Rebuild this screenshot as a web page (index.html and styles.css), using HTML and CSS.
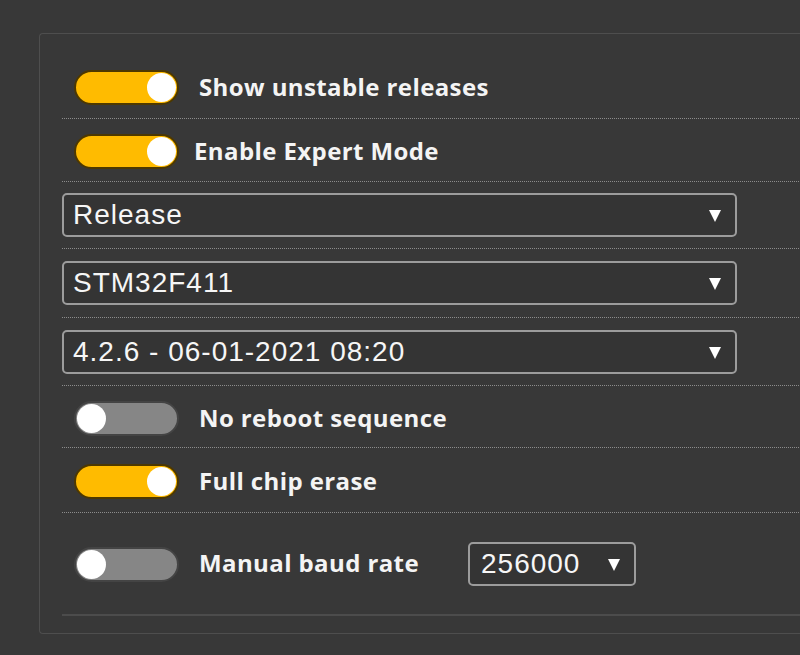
FILE: index.html
```html
<!DOCTYPE html>
<html lang="en">
<head>
<meta charset="utf-8">
<title>Firmware Flasher Options</title>
<link rel="stylesheet" href="styles.css">
</head>
<body>
<div class="page">
  <div class="panel">
    <div class="options">
      <div class="row row-first">
        <label class="toggle on"><span class="knob"></span></label>
        <span class="label">Show unstable releases</span>
      </div>
      <div class="row row-second">
        <label class="toggle on"><span class="knob"></span></label>
        <span class="label label-tight">Enable Expert Mode</span>
      </div>
      <div class="row row-select row-select-a">
        <div class="select wide"><span class="value">Release</span><span class="arrow"></span></div>
      </div>
      <div class="row row-select row-select-b">
        <div class="select wide"><span class="value">STM32F411</span><span class="arrow"></span></div>
      </div>
      <div class="row row-select row-select-c">
        <div class="select wide"><span class="value">4.2.6 - 06-01-2021 08:20</span><span class="arrow"></span></div>
      </div>
      <div class="row row-sixth">
        <label class="toggle"><span class="knob"></span></label>
        <span class="label">No reboot sequence</span>
      </div>
      <div class="row row-seventh">
        <label class="toggle on"><span class="knob"></span></label>
        <span class="label">Full chip erase</span>
      </div>
      <div class="row row-last">
        <label class="toggle"><span class="knob"></span></label>
        <span class="label">Manual baud rate</span>
        <div class="select baud"><span class="value">256000</span><span class="arrow"></span></div>
      </div>
    </div>
  </div>
</div>
</body>
</html>
```

FILE: styles.css
```css
* {
  box-sizing: border-box;
}

html, body {
  margin: 0;
  background: #383838;
  overflow: hidden;
}

.page {
  width: 800px;
  height: 655px;
  padding: 33px 0 0 39px;
}

/* bordered box that runs off the right edge */
.panel {
  width: 800px;
  height: 601px;
  border: 1px solid #4e4e4e;
  border-right: none;
  border-radius: 4px 0 0 4px;
  padding: 0 0 0 22px;
  background: #383838;
}

.options {
  border-bottom: 2px solid #4c4c4c;
}

.row {
  display: flex;
  align-items: center;
  border-bottom: 1px dotted #8c8c8c;
  padding: 15px 0 12px 0;
}

.row-first { padding: 36px 0 13px 0; }
.row-second { padding: 15px 0 12px 0; }
.row-select-a { padding: 11px 0 11px 0; }
.row-select-b { padding: 12px 0 12px 0; }
.row-select-c { padding: 12px 0 11px 0; }
.row-sixth { padding: 15px 0 11px 0; }
.row-seventh { padding: 16px 0 13px 0; }
.row-last {
  padding: 29px 0 28px 0;
  border-bottom: none;
}

/* switch */
.toggle {
  position: relative;
  flex: none;
  width: 105px;
  height: 35px;
  margin-left: 12px;
  border-radius: 18px;
  background: #868686;
  border: 2px solid #444444;
}

.toggle.on {
  background: #ffbb00;
  border-color: #4d3800;
}

.knob {
  position: absolute;
  top: 1px;
  left: 1px;
  width: 29px;
  height: 29px;
  border-radius: 50%;
  background: #ffffff;
}

.toggle.on .knob {
  left: auto;
  right: 1px;
}

.label {
  margin-left: 20px;
  margin-top: -3px;
  font-family: "Open Sans", "Liberation Sans", sans-serif;
  font-weight: 700;
  font-size: 24px;
  letter-spacing: 0.4px;
  color: #f4f4f4;
  white-space: nowrap;
}

.label-tight {
  margin-left: 15px;
}

/* dropdowns */
.select {
  position: relative;
  display: flex;
  align-items: center;
  height: 44px;
  border: 2px solid #9c9c9c;
  border-radius: 5px;
  background: #343434;
  padding-left: 9px;
  font-family: "Liberation Sans", Arial, sans-serif;
  font-size: 28px;
  letter-spacing: 1px;
  color: #f6f6f6;
}

.select.wide {
  width: 675px;
}

.select.baud {
  width: 168px;
  margin-left: 49px;
  padding-left: 11px;
}

.arrow {
  position: absolute;
  right: 14px;
  top: 15px;
  width: 0;
  height: 0;
  border-left: 6px solid transparent;
  border-right: 6px solid transparent;
  border-top: 12px solid #ffffff;
}
```
